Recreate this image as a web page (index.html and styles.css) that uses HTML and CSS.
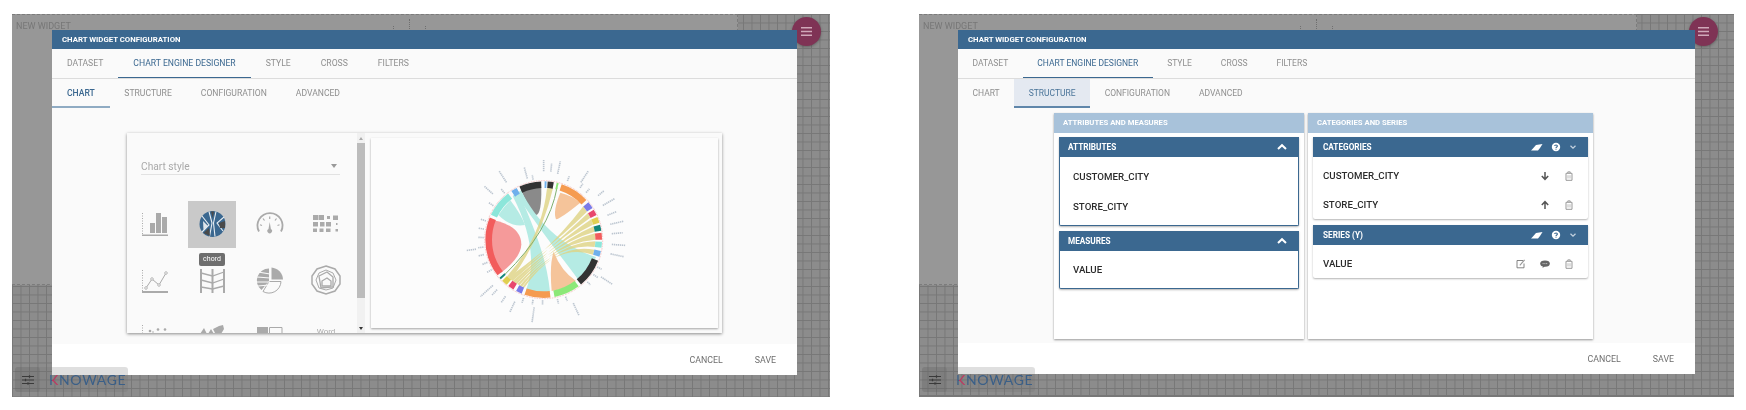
FILE: index.html
```html
<!DOCTYPE html>
<html lang="en">
<head>
    <meta charset="UTF-8">
    <title>Chart widget configuration</title>
    <link rel="stylesheet" href="styles.css">
</head>
<body>
    <svg class="defs" width="0" height="0">
        <symbol id="ic-eraser" viewBox="0 0 12 8"><path d="M0 7.500 1.500 6 5 2 11.500 1 9 5 7 7.500z" fill="#fff"/></symbol>
        <symbol id="ic-help" viewBox="0 0 10 10"><circle cx="5" cy="5" r="4.200" fill="#fff"/><path d="M3.600 4C3.700 2.600 6.400 2.600 6.400 4 6.400 5 5 5 5 6.100" fill="none" stroke="#3b6890" stroke-width="1.100"/><rect x="4.500" y="6.700" width="1" height="1" fill="#3b6890"/></symbol>
        <symbol id="ic-down" viewBox="0 0 8 8"><path d="M1.500 2.800 4 5.200 6.500 2.800" fill="none" stroke="#c5d3e0" stroke-width="1.200"/></symbol>
        <symbol id="ic-up" viewBox="0 0 10 8"><path d="M1 6 5 2.200 9 6" fill="none" stroke="#fff" stroke-width="2"/></symbol>
        <symbol id="ic-arrow" viewBox="0 0 10 10"><path d="M5 1v7M1.800 5 5 8.300 8.200 5" fill="none" stroke="#555" stroke-width="1.500"/></symbol>
        <symbol id="ic-trash" viewBox="0 0 10 10"><path d="M2 2.300h6v7H2zM3.800 2V.900h2.400V2" fill="none" stroke="#999"/><path d="M4 4.200v3.300M6 4.200v3.300" stroke="#bbb"/></symbol>
        <symbol id="ic-edit" viewBox="0 0 10 10"><path d="M7 1.500H1v7.300h7V4.500" fill="none" stroke="#777" stroke-width=".9"/><path d="M3.800 6.300 8.600.8" stroke="#999" stroke-width="1.200"/></symbol>
        <symbol id="ic-comment" viewBox="0 0 10 10"><ellipse cx="5" cy="4.600" rx="4.800" ry="3.200" fill="#666"/><path d="M3 7l-.5 2L5 7.200z" fill="#666"/><path d="M2.600 4.600h4.800" stroke="#ccc" stroke-dasharray="1 .8"/></symbol>
        <symbol id="ic-menu" viewBox="0 0 14 12"><path d="M1 2h12M1 6h12M1 10h12" stroke="#d0a8b9" stroke-width="1.700"/></symbol>
        <symbol id="ic-tune" viewBox="0 0 12 10"><path d="M0 1.500h12M0 5h12M0 8.500h12" stroke="#3a3a3a"/><path d="M7.500.2v2.600M3.500 3.700v2.600M6 7.200v2.600" stroke="#3a3a3a" stroke-width="1.200"/></symbol>
    </svg>

    <div class="screen screen-left">
        <div class="widget">
            <span class="widget-title">NEW WIDGET</span>
            <span class="widget-marks"><i></i><i class="tall"></i><i></i></span>
        </div>
        <button class="fab"><svg width="13" height="11"><use href="#ic-menu"/></svg></button>

        <div class="dialog">
            <div class="dialog-title">CHART WIDGET CONFIGURATION</div>
            <div class="tabs">
                <span class="tab">DATASET</span>
                <span class="tab active">CHART ENGINE DESIGNER</span>
                <span class="tab">STYLE</span>
                <span class="tab">CROSS</span>
                <span class="tab">FILTERS</span>
            </div>
            <div class="subtabs">
                <span class="tab active">CHART</span>
                <span class="tab">STRUCTURE</span>
                <span class="tab">CONFIGURATION</span>
                <span class="tab">ADVANCED</span>
            </div>
            <div class="content content-chart">
                <div class="chart-card">
                    <div class="picker">
                        <div class="select"><span>Chart style</span><b></b></div>
                        <div class="type-grid">
                            <svg class="type" viewBox="0 0 48 47"><path d="M11.500 12v23" stroke="#aaa" stroke-dasharray="1 1.500"/><path d="M19 22h5v10h-5zM25 12h5v20h-5zM31 16h5v16h-5zM11 33.500h26V35H11z" fill="#aaa"/></svg>
                            <div class="type selected">
                                <svg viewBox="0 0 48 47"><circle cx="24.500" cy="23" r="13" fill="#3b6890"/><path d="M21 10.500 24 22 21.500 35.500M28 10.500 25.500 22 27 35.500M14 15 21 24 14 31M36 16 29 22 35 30" fill="none" stroke="#e8eef3" stroke-width="1.100"/><path d="M15 20 20 25 15.500 29z" fill="#dfe6ec"/><path d="M23 10.500h3L24.800 17z" fill="#4a4a4a"/><path d="M15.500 32 21 27 22 35z" fill="#4a4a4a"/><path d="M31 22 37 20 37 27 32 27z" fill="#4a4a4a"/></svg>
                            </div>
                            <svg class="type" viewBox="0 0 48 47"><path d="M14 30.500A12.500 12.500 0 1 1 36 30.500" fill="none" stroke="#aaa" stroke-width="1.800"/><path d="M24.700 21l1.200 7a2.300 2.300 0 1 1-2.400 0z" fill="#aaa"/><path d="M24.700 18v-2.500M19.500 19.500l-1.500-2M30 19.500l1.500-2M17 24.500l-2-.7M32.500 24.500l2-.7" stroke="#aaa" stroke-width="1.200"/></svg>
                            <svg class="type" viewBox="0 0 48 47"><path d="M11 14h5.500v5H11zM17 14h5v5h-5zM25 15h3v3h-3zM31 14.500h5V19h-5zM11 21h5v4.500h-5zM18 21h4.500v4.500H18zM24 21h5v4.500h-5zM34 22h1.500v2H34zM11 27.500h4V31h-4zM17.500 27.500h4V31h-4zM24 27.500h4.500V31H24zM33.500 28h2.500v2.500h-2.500z" fill="#aaa"/></svg>

                            <svg class="type" viewBox="0 0 48 47"><path d="M11.500 13v22" stroke="#aaa" stroke-dasharray="1 1.500"/><path d="M11 34h26v2H11z" fill="#aaa"/><path d="M15 31 21 22 28 28 35 16" fill="none" stroke="#aaa"/><g fill="#fafafa" stroke="#aaa" stroke-width=".8"><circle cx="15" cy="31" r="1.300"/><circle cx="21" cy="22" r="1.300"/><circle cx="28" cy="28" r="1.300"/><circle cx="35" cy="16" r="1.300"/></g></svg>
                            <svg class="type" viewBox="0 0 48 47"><path d="M13 12v24M24.500 12v24M36 12v24" stroke="#aaa" stroke-width="2"/><path d="M13 16 24.500 19 36 15M13 23 24.500 26 36 22M13 30 24.500 32 36 29" fill="none" stroke="#aaa" stroke-width="1.300"/></svg>
                            <svg class="type" viewBox="0 0 48 47"><path d="M26.500 10.500A12.500 12.500 0 0 1 38 22.500H26.500z" fill="#aaa"/><path d="M24 24.500h12A12 12 0 0 1 18 34.500z" fill="none" stroke="#aaa"/><path d="M24 11.500A12 12 0 0 0 16.500 33L24 24z" fill="#aaa"/><path d="M13 15 25 17M12 20 25 21M12 25 25 25M13 29 24 28" stroke="#fafafa" stroke-width="1.200"/></svg>
                            <svg class="type" viewBox="0 0 48 47" fill="none" stroke="#aaa"><path d="M24 9 33 12 38 19 38 27 33 34 24 37 15 34 10 27 10 19 15 12z" stroke-width="1.500"/><path d="M24 13 31 16 34 23 31 31 24 33 17 31 14 23 17 16z"/><path d="M17 19 25 15 31 20 31 30 19 31z" stroke-width="1.300"/><path d="M20 24 25 21 29 24 29 29 20 29z" stroke-width="1.300"/></svg>

                            <svg class="type" viewBox="0 0 48 47"><path d="M11.500 12v12" stroke="#aaa" stroke-dasharray="1 1.500"/><g fill="#aaa"><circle cx="19" cy="18" r="1.300"/><circle cx="22" cy="19" r=".8"/><circle cx="27" cy="16.500" r="1.300"/><circle cx="34" cy="16.500" r="1.300"/></g></svg>
                            <svg class="type" viewBox="0 0 48 47"><path d="M12 21 16 15 19 21zM20 21 23 16 26 21zM25 16 31 13 35 12 36 16 33 21 27 20z" fill="#aaa"/></svg>
                            <svg class="type" viewBox="0 0 48 47"><rect x="12" y="14" width="11" height="9" fill="#aaa"/><path d="M24.500 14.500H37v7H24.500zM29 23h3" fill="none" stroke="#aaa"/></svg>
                            <span class="type word">Word</span>
                        </div>
                        <span class="tooltip">chord</span>
                    </div>
                    <div class="scrollbar">
                        <i class="arrow"></i>
                        <div class="thumb"></div>
                        <i class="arrow down"></i>
                    </div>
                    <div class="chart-box">
                        <svg viewBox="-150 21 1041 570" width="347" height="190">
                            <g class="ribbons">
                                <path fill="#8a8a8a" d="M300 178Q330 162 361 170Q362 250 345 252Q332 250 300 178Z"/>
                                <path fill="#f5c49a" d="M418 185Q452 193 478 215Q420 262 405 265Q395 240 418 185Z"/>
                                <path fill="#f59a9a" d="M218 268Q300 285 301 340Q300 380 240 425A155 155 0 0 1 218 268Z"/>
                                <path fill="#b5ebe4" d="M232 252Q248 228 268 208Q300 250 312 282Q270 290 232 252Z"/>
                                <path fill="#b5ebe4" d="M275 195 292 180C320 250 375 360 387 482 350 486 315 478 315 478 345 400 330 300 275 195Z"/>
                                <path fill="#b5ebe4" d="M285 190 300 178C345 270 420 345 525 378 505 418 472 447 472 447 440 400 395 350 285 190Z"/>
                                <path fill="#f5c49a" d="M392 480Q385 400 398 362Q420 420 465 450 432 474 392 480Z"/>
                                <g fill="#dfd484" opacity=".8">
                                    <path d="M378 172 396 172Q362 320 270 446L258 436Q362 320 378 172Z"/>
                                    <path d="M487 226Q405 335 270 446L262 440Q405 335 498 242Z"/>
                                    <path d="M501 246Q405 335 275 450L267 444Q405 335 508 260Z"/>
                                    <path d="M511 265Q405 335 282 456L275 450Q405 335 516 281Z"/>
                                    <path d="M518 286Q405 335 288 459L282 455Q405 335 521 302Z"/>
                                    <path d="M522 307Q405 335 295 463L289 459Q405 335 523 326Z"/>
                                    <path d="M523 331Q405 335 303 467L296 464Q405 335 521 348Z"/>
                                    <path d="M520 356Q405 335 310 470L304 468Q405 335 516 371Z"/>
                                </g>
                                <path fill="none" stroke="#7fb070" stroke-width="3" d="M408 170Q385 300 252 430"/>
                            </g>
                            <g transform="translate(368 326)">
                                <g class="arcs" transform="rotate(-90)">
                                    <circle r="165" pathLength="360" stroke="#6fb0ec" stroke-dasharray="2 360" stroke-dashoffset="-1"/>
                                    <circle r="165" pathLength="360" stroke="#333" stroke-dasharray="6 360" stroke-dashoffset="-4"/>
                                    <circle r="165" pathLength="360" stroke="#8ce878" stroke-dasharray="2 360" stroke-dashoffset="-13"/>
                                    <circle r="165" pathLength="360" stroke="#f59b50" stroke-dasharray="29 360" stroke-dashoffset="-18"/>
                                    <circle r="165" pathLength="360" stroke="#7b7be8" stroke-dasharray="7 360" stroke-dashoffset="-50"/>
                                    <circle r="165" pathLength="360" stroke="#e8476e" stroke-dasharray="6 360" stroke-dashoffset="-59"/>
                                    <circle r="165" pathLength="360" stroke="#e0cf50" stroke-dasharray="6 360" stroke-dashoffset="-67"/>
                                    <circle r="165" pathLength="360" stroke="#12857a" stroke-dasharray="6 360" stroke-dashoffset="-75"/>
                                    <circle r="165" pathLength="360" stroke="#f25c5c" stroke-dasharray="7 360" stroke-dashoffset="-83"/>
                                    <circle r="165" pathLength="360" stroke="#8ce6da" stroke-dasharray="6 360" stroke-dashoffset="-92"/>
                                    <circle r="165" pathLength="360" stroke="#6fb0ec" stroke-dasharray="6 360" stroke-dashoffset="-101"/>
                                    <circle r="165" pathLength="360" stroke="#333" stroke-dasharray="29 360" stroke-dashoffset="-111"/>
                                    <circle r="165" pathLength="360" stroke="#8ce878" stroke-dasharray="26 360" stroke-dashoffset="-143"/>
                                    <circle r="165" pathLength="360" stroke="#f59b50" stroke-dasharray="26 360" stroke-dashoffset="-173"/>
                                    <circle r="165" pathLength="360" stroke="#7b7be8" stroke-dasharray="6 360" stroke-dashoffset="-202"/>
                                    <circle r="165" pathLength="360" stroke="#e8476e" stroke-dasharray="6 360" stroke-dashoffset="-211"/>
                                    <circle r="165" pathLength="360" stroke="#e0cf50" stroke-dasharray="6 360" stroke-dashoffset="-219"/>
                                    <circle r="165" pathLength="360" stroke="#12857a" stroke-dasharray="2 360" stroke-dashoffset="-227"/>
                                    <circle r="165" pathLength="360" stroke="#f25c5c" stroke-dasharray="60 360" stroke-dashoffset="-232"/>
                                    <circle r="165" pathLength="360" stroke="#8ce6da" stroke-dasharray="27 360" stroke-dashoffset="-295"/>
                                    <circle r="165" pathLength="360" stroke="#6fb0ec" stroke-dasharray="6 360" stroke-dashoffset="-326"/>
                                    <circle r="165" pathLength="360" stroke="#333" stroke-dasharray="22 360" stroke-dashoffset="-335"/>
                                </g>
                                <circle class="rim" r="177"/>
                                <g class="labels">
                                    <path transform="rotate(0)" d="M0-205V-240"/>
                                    <path transform="rotate(6)" d="M0-205V-230"/>
                                    <path transform="rotate(12)" d="M0-202V-240"/>
                                    <path transform="rotate(22)" d="M0-190V-205"/>
                                    <path transform="rotate(33)" d="M0-205V-245"/>
                                    <path transform="rotate(35)" d="M0-190V-205"/>
                                    <path transform="rotate(42)" d="M0-190V-205"/>
                                    <path transform="rotate(51)" d="M0-210V-232"/>
                                    <path transform="rotate(60)" d="M0-205V-245"/>
                                    <path transform="rotate(69)" d="M0-205V-235"/>
                                    <path transform="rotate(77)" d="M0-205V-245"/>
                                    <path transform="rotate(85)" d="M0-205V-238"/>
                                    <path transform="rotate(94)" d="M0-205V-245"/>
                                    <path transform="rotate(102)" d="M0-205V-245"/>
                                    <path transform="rotate(117)" d="M0-180V-195"/>
                                    <path transform="rotate(123)" d="M0-205V-245"/>
                                    <path transform="rotate(125)" d="M0-182V-198"/>
                                    <path transform="rotate(134)" d="M0-182V-195"/>
                                    <path transform="rotate(155)" d="M0-210V-250"/>
                                    <path transform="rotate(159)" d="M0-183V-197"/>
                                    <path transform="rotate(167)" d="M0-183V-197"/>
                                    <path transform="rotate(181)" d="M0-182V-195"/>
                                    <path transform="rotate(188)" d="M0-205V-250"/>
                                    <path transform="rotate(190)" d="M0-183V-197"/>
                                    <path transform="rotate(199)" d="M0-185V-200"/>
                                    <path transform="rotate(205)" d="M0-205V-240"/>
                                    <path transform="rotate(214)" d="M0-205V-228"/>
                                    <path transform="rotate(223)" d="M0-205V-228"/>
                                    <path transform="rotate(228)" d="M0-205V-255"/>
                                    <path transform="rotate(240)" d="M0-180V-196"/>
                                    <path transform="rotate(248)" d="M0-182V-198"/>
                                    <path transform="rotate(256)" d="M0-185V-203"/>
                                    <path transform="rotate(262)" d="M0-205V-235"/>
                                    <path transform="rotate(263)" d="M0-182V-198"/>
                                    <path transform="rotate(272)" d="M0-180V-196"/>
                                    <path transform="rotate(280)" d="M0-182V-198"/>
                                    <path transform="rotate(288)" d="M0-182V-198"/>
                                    <path transform="rotate(304)" d="M0-182V-198"/>
                                    <path transform="rotate(312)" d="M0-205V-240"/>
                                    <path transform="rotate(320)" d="M0-182V-198"/>
                                    <path transform="rotate(327)" d="M0-205V-245"/>
                                    <path transform="rotate(345)" d="M0-190V-225"/>
                                    <path transform="rotate(350)" d="M0-183V-197"/>
                                </g>
                            </g>
                        </svg>
                    </div>
                </div>
            </div>
            <div class="actions">
                <span>CANCEL</span>
                <span>SAVE</span>
            </div>
        </div>

        <div class="brand-bar">
            <span class="brand-btn"><svg width="12" height="10"><use href="#ic-tune"/></svg></span>
            <span class="brand"><em>K</em>NOWAGE</span>
        </div>
    </div>

    <div class="screen screen-right">
        <div class="widget">
            <span class="widget-title">NEW WIDGET</span>
            <span class="widget-marks"><i></i><i class="tall"></i><i></i></span>
        </div>
        <button class="fab"><svg width="13" height="11"><use href="#ic-menu"/></svg></button>

        <div class="dialog">
            <div class="dialog-title">CHART WIDGET CONFIGURATION</div>
            <div class="tabs">
                <span class="tab">DATASET</span>
                <span class="tab active">CHART ENGINE DESIGNER</span>
                <span class="tab">STYLE</span>
                <span class="tab">CROSS</span>
                <span class="tab">FILTERS</span>
            </div>
            <div class="subtabs">
                <span class="tab">CHART</span>
                <span class="tab active">STRUCTURE</span>
                <span class="tab">CONFIGURATION</span>
                <span class="tab">ADVANCED</span>
            </div>
            <div class="content content-structure">
                <div class="column column-left">
                    <div class="column-title">ATTRIBUTES AND MEASURES</div>
                    <div class="box outlined">
                        <div class="box-head">ATTRIBUTES <svg class="icon-up"><use href="#ic-up"/></svg></div>
                        <div class="row">CUSTOMER_CITY</div>
                        <div class="row">STORE_CITY</div>
                    </div>
                    <div class="box outlined">
                        <div class="box-head">MEASURES <svg class="icon-up"><use href="#ic-up"/></svg></div>
                        <div class="row">VALUE</div>
                    </div>
                </div>
                <div class="column column-right">
                    <div class="column-title">CATEGORIES AND SERIES</div>
                    <div class="box">
                        <div class="box-head">CATEGORIES
                            <span class="head-icons">
                                <svg width="12" height="8"><use href="#ic-eraser"/></svg>
                                <svg width="10" height="10"><use href="#ic-help"/></svg>
                                <svg width="8" height="8"><use href="#ic-down"/></svg>
                            </span>
                        </div>
                        <div class="row">CUSTOMER_CITY
                            <span class="row-icons">
                                <svg width="10" height="10"><use href="#ic-arrow"/></svg>
                                <svg width="10" height="10"><use href="#ic-trash"/></svg>
                            </span>
                        </div>
                        <div class="row">STORE_CITY
                            <span class="row-icons">
                                <svg class="flip" width="10" height="10"><use href="#ic-arrow"/></svg>
                                <svg width="10" height="10"><use href="#ic-trash"/></svg>
                            </span>
                        </div>
                    </div>
                    <div class="box">
                        <div class="box-head">SERIES (Y)
                            <span class="head-icons">
                                <svg width="12" height="8"><use href="#ic-eraser"/></svg>
                                <svg width="10" height="10"><use href="#ic-help"/></svg>
                                <svg width="8" height="8"><use href="#ic-down"/></svg>
                            </span>
                        </div>
                        <div class="row">VALUE
                            <span class="row-icons">
                                <svg width="10" height="10"><use href="#ic-edit"/></svg>
                                <svg width="10" height="10"><use href="#ic-comment"/></svg>
                                <svg width="10" height="10"><use href="#ic-trash"/></svg>
                            </span>
                        </div>
                    </div>
                </div>
            </div>
            <div class="actions">
                <span>CANCEL</span>
                <span>SAVE</span>
            </div>
        </div>

        <div class="brand-bar">
            <span class="brand-btn"><svg width="12" height="10"><use href="#ic-tune"/></svg></span>
            <span class="brand"><em>K</em>NOWAGE</span>
        </div>
    </div>
</body>
</html>
```

FILE: styles.css
```css
html, body {
    margin: 0;
    padding: 0;
    height: 100%;
    background: #fff;
}

body {
    display: flex;
    justify-content: space-between;
    padding: 14px 12px 13px;
    box-sizing: border-box;
    font-family: 'Roboto', sans-serif;
    overflow: hidden;
}

.defs {
    position: absolute;
}

/* grey dimmed cockpit behind the dialog */
.screen {
    position: relative;
    height: 383px;
    overflow: hidden;
    background-color: #8c8c8c;
    background-image:
        linear-gradient(#777 1px, transparent 1px),
        linear-gradient(90deg, #777 1px, transparent 1px);
    background-size: 8.500px 8.500px;
    filter: blur(.35px);
}

.screen-left {
    width: 818px;
}

.screen-right {
    width: 815px;
    border-bottom: 2px solid #777;
    box-sizing: border-box;
}

.widget {
    position: absolute;
    left: 0;
    top: 0;
    width: 726px;
    height: 271px;
    background: #979797;
    border: 1px dashed #7c7c7c;
    border-width: 1px 1px 1px 0;
    box-sizing: border-box;
    font-size: 9px;
    color: #777;
}

.screen-right .widget {
    width: 718px;
}

.widget-title {
    position: absolute;
    left: 4px;
    top: 6px;
}

.widget-marks {
    position: absolute;
    left: 381px;
    top: 9px;
    display: flex;
    gap: 14px;
    align-items: flex-end;
    height: 7px;
}

.widget-marks i {
    width: 1px;
    height: 5px;
    border-left: 1px dotted #6f6f6f;
}

.widget-marks i.tall {
    height: 12px;
}

.fab {
    position: absolute;
    left: 780px;
    top: 3px;
    width: 29px;
    height: 29px;
    padding: 0;
    border: none;
    border-radius: 50%;
    background: #7f3355;
    box-shadow: 0 1px 3px rgba(0, 0, 0, 0.3);
    display: flex;
    align-items: center;
    justify-content: center;
}

.screen-right .fab {
    left: 770px;
}

.dialog {
    position: absolute;
    left: 40px;
    top: 16px;
    width: 745px;
    height: 345px;
    background: #fff;
    display: flex;
    flex-direction: column;
}

.screen-right .dialog {
    left: 39px;
    width: 737px;
    height: 344px;
}

.dialog-title {
    height: 19px;
    line-height: 19px;
    padding-left: 10px;
    background: #3b6890;
    color: #fff;
    font-size: 7.800px;
    font-weight: 700;
    flex: none;
}

.tabs, .subtabs {
    display: flex;
    height: 29px;
    flex: none;
    background: #fafafa;
    box-sizing: border-box;
}

.tabs {
    height: 30px;
    border-bottom: 1px solid #dcdcdc;
}

.tab {
    padding: 0 15px;
    line-height: 29px;
    font-size: 8.650px;
    color: #8f8f8f;
    box-sizing: border-box;
}

.screen-left .subtabs .tab {
    padding: 0 14.500px;
    font-size: 8.600px;
}

.screen-left .subtabs .tab:first-child {
    padding: 0 15px;
}

.screen-right .tab {
    font-size: 8.500px;
    padding: 0 14.500px;
}

.tabs .tab {
    height: 29px;
}

.tabs .tab.active {
    color: #3b6890;
    border-bottom: 1px solid #3b6890;
}

.subtabs .tab.active {
    color: #3b6890;
    font-weight: 500;
    border-bottom: 2px solid #8fabc3;
}

.screen-right .subtabs .tab.active {
    background: #e4e9f1;
    color: #4a7499;
    font-weight: 400;
    border-bottom-color: #5f86aa;
}

.content {
    flex: 1;
    background: #fafafa;
    box-sizing: border-box;
    min-height: 0;
}

.actions {
    flex: none;
    height: 31px;
    display: flex;
    justify-content: flex-end;
    align-items: center;
    gap: 32px;
    padding-right: 21px;
    font-size: 8.800px;
    color: #6e6e6e;
}

/* chart tab */
.content-chart {
    padding: 25px 0 0 75px;
}

.chart-card {
    position: relative;
    width: 595px;
    height: 200px;
    display: flex;
    background: #fafafa;
    box-shadow: 0 1px 3px rgba(0, 0, 0, 0.45);
}

.picker {
    width: 230px;
    overflow: hidden;
    box-sizing: border-box;
    padding: 25px 0 0 4px;
}

.select {
    display: flex;
    justify-content: space-between;
    align-items: center;
    width: 199px;
    height: 17px;
    margin: 0 0 26px 10px;
    border-bottom: 1px solid #e2e2e2;
    font-size: 10.200px;
    color: #a9a9a9;
    box-sizing: border-box;
}

.select b {
    width: 0;
    height: 0;
    margin-right: 3px;
    border: 3px solid transparent;
    border-top: 4px solid #999;
    border-bottom: none;
}

.type-grid {
    display: grid;
    grid-template-columns: repeat(4, 48px);
    grid-auto-rows: 47px;
    column-gap: 9px;
    row-gap: 9px;
}

.type {
    display: block;
    width: 48px;
    height: 47px;
}

.type.selected {
    background: #c9c9c9;
}

.word {
    font-size: 8px;
    color: #aaa;
    text-align: center;
    padding-top: 14px;
    box-sizing: border-box;
}

.tooltip {
    position: absolute;
    left: 72px;
    top: 120px;
    width: 26px;
    height: 13px;
    line-height: 13px;
    border-radius: 2px;
    background: #6e6e6e;
    color: #fff;
    font-size: 7px;
    text-align: center;
}

.scrollbar {
    width: 8px;
    margin-right: 6px;
    background: #f1f1f1;
    display: flex;
    flex-direction: column;
    align-items: center;
    justify-content: space-between;
    box-sizing: border-box;
    position: relative;
}

.scrollbar .arrow {
    width: 0;
    height: 0;
    margin-top: 4px;
    border: 2px solid transparent;
    border-bottom: 3px solid #aaa;
    border-top: none;
}

.scrollbar .arrow.down {
    margin: 0 0 3px;
    border: 2px solid transparent;
    border-top: 3px solid #333;
    border-bottom: none;
}

.thumb {
    position: absolute;
    left: 0;
    top: 10px;
    width: 100%;
    height: 155px;
    background: #bcbcbc;
}

.chart-box {
    width: 347px;
    height: 190px;
    margin-top: 5px;
    background: #fcfcfc;
    box-shadow: 0 1px 2px rgba(0, 0, 0, 0.35);
}

.chart-box svg {
    display: block;
}

.arcs circle {
    fill: none;
    stroke-width: 20;
}

.rim {
    fill: none;
    stroke: #f5a9a9;
    stroke-width: 3;
    stroke-dasharray: 2 3;
}

.labels path {
    stroke: #7d90a5;
    stroke-width: 5;
    stroke-dasharray: 4 2;
    opacity: .5;
}

/* structure tab */
.content-structure {
    display: flex;
    gap: 4px;
    padding: 5px 0 0 96px;
}

.column {
    height: 226px;
    background: #fff;
    box-shadow: 0 1px 2px rgba(0, 0, 0, 0.4);
}

.column-left {
    width: 250px;
}

.column-right {
    width: 285px;
}

.column-title {
    height: 20px;
    line-height: 20px;
    padding-left: 9px;
    background: #a8c2da;
    color: #fff;
    font-size: 7.700px;
    font-weight: 700;
}

.box {
    margin: 4px 5px 0;
    background: #fff;
    box-shadow: 0 1px 2px rgba(0, 0, 0, 0.3);
    border-radius: 0 0 2px 2px;
}

.box + .box {
    margin-top: 5px;
}

.box.outlined {
    border: 1px solid #3b6890;
    border-top: none;
}

.box-head {
    height: 20px;
    display: flex;
    align-items: center;
    justify-content: space-between;
    padding: 0 11px 0 10px;
    background: #3b6890;
    color: #fff;
    font-size: 8.200px;
    font-weight: 700;
}

.box.outlined .box-head {
    padding-left: 8px;
}

.icon-up {
    width: 10px;
    height: 8px;
}

.head-icons {
    display: flex;
    align-items: center;
    gap: 8px;
}

.row {
    height: 29px;
    display: flex;
    align-items: center;
    justify-content: space-between;
    padding: 0 14px 0 10px;
    font-size: 9.700px;
    font-weight: 500;
    color: #2b2b2b;
}

.box.outlined .row {
    height: 30px;
    padding-left: 13px;
}

.box-head + .row {
    margin-top: 4px;
}

.box .row:last-child {
    margin-bottom: 6px;
}

.box.outlined .row:last-child {
    margin-bottom: 4px;
}

.box + .box .row:last-child {
    margin-bottom: 4px;
}

.box.outlined + .box.outlined .box-head + .row {
    margin-top: 3px;
}

.row-icons {
    display: flex;
    gap: 14px;
}

.flip {
    transform: rotate(180deg);
}

/* bottom left brand strip */
.brand-bar {
    position: absolute;
    left: 3px;
    top: 353px;
    width: 113px;
    height: 25px;
    display: flex;
    align-items: center;
    gap: 9px;
    border-radius: 3px;
    background: rgba(110, 110, 110, 0.22);
}

.brand-btn {
    width: 25px;
    height: 25px;
    display: flex;
    align-items: center;
    justify-content: center;
    border-radius: 3px;
    background: rgba(90, 90, 90, 0.15);
}

.brand {
    font-family: 'Lato', sans-serif;
    font-size: 14px;
    letter-spacing: .7px;
    color: #3a5f88;
}

.brand em {
    font-style: normal;
    background: linear-gradient(90deg, #3a5f88 28%, #c2335f 32%);
    -webkit-background-clip: text;
    background-clip: text;
    color: transparent;
}
```
